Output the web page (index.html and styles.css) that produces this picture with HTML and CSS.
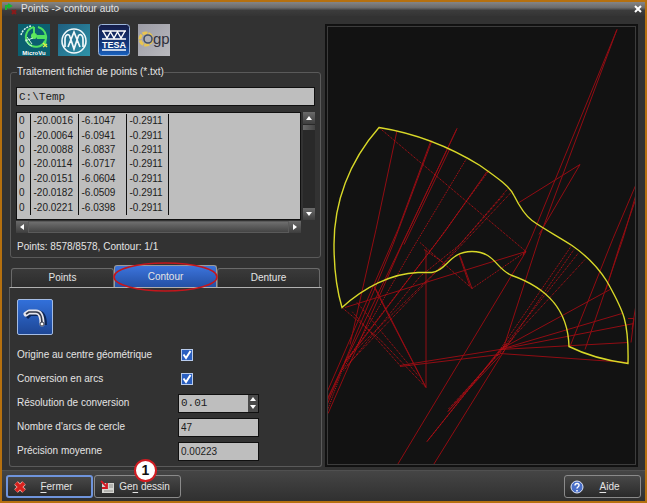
FILE: index.html
```
<!DOCTYPE html>
<html lang="fr">
<head>
  <meta charset="UTF-8" />
  <title>Points -&gt; contour auto</title>
  <link rel="stylesheet" href="styles.css">
</head>
<body>

  <div class="window">

    <!-- Barre de titre -->
    <header class="titlebar">
      <svg class="app-icon" viewBox="0 0 12 12">
        <path d="M1 7V3h4M3 1l3 2-3 2" fill="none" stroke="#19b432" stroke-width="2" />
        <path d="M7 7l4 4M11 7l-4 4" stroke="#8c1a1a" stroke-width="2" />
      </svg>
      <h1>Points -&gt; contour auto</h1>
      <button class="close" aria-label="Fermer la fenêtre">
        <svg viewBox="0 0 8 8"><path d="M1 1l6 6M7 1L1 7" stroke="#fff" stroke-width="2" /></svg>
      </button>
    </header>

    <main class="content">
      <section class="left">

        <!-- Choix du format de machine -->
        <div class="logos">
          <button aria-label="MicroVu">
            <svg viewBox="0 0 32 32">
              <rect width="32" height="32" fill="#0b6070" />
              <path d="M3 11a13 13 0 0 1 10-9" fill="none" stroke="#d8f4ee" stroke-width="1.5" stroke-dasharray="2 1" />
              <path d="M16 3a10 10 0 1 0 11 14M16 3v9M20 3a11 11 0 0 1 8 9h-9M19 14h9l-1 6" fill="none" stroke="#4fe060" stroke-width="2" />
              <circle cx="16" cy="12" r="3" fill="#5fe85c" />
              <path d="M8 15a8 8 0 0 0 6 7M9 13l5 7M7 17l8-3" fill="none" stroke="#c8f6d8" />
              <path d="M25 19l4 4m-4 0l4-3" stroke="#d8f04a" stroke-width="1.5" />
              <text x="16" y="31" class="logo-text" font-size="6" fill="#fff">MicroVu</text>
            </svg>
          </button>
          <button aria-label="Mitutoyo">
            <svg viewBox="0 0 32 32">
              <defs>
                <linearGradient id="g-mit" x1="0" y1="0" x2="1" y2="1">
                  <stop offset="0" stop-color="#1f5f80" />
                  <stop offset="1" stop-color="#2f93a8" />
                </linearGradient>
              </defs>
              <rect width="32" height="32" fill="url(#g-mit)" />
              <circle cx="16" cy="17" r="12" fill="none" stroke="#f2f8fa" stroke-width="1.6" />
              <path d="M7 23V16c0-6 4-7 5-3l4 12 4-12c1-4 5-3 5 3v7M10 23l6-15 6 15" fill="none" stroke="#f2f8fa" stroke-width="1.7" />
            </svg>
          </button>
          <button aria-label="TESA">
            <svg viewBox="0 0 32 32">
              <defs>
                <linearGradient id="g-tesa" x1="0" y1="0" x2="0" y2="1">
                  <stop offset="0" stop-color="#141c48" />
                  <stop offset="0.7" stop-color="#143a82" />
                  <stop offset="1" stop-color="#1a66c4" />
                </linearGradient>
              </defs>
              <rect x="0.5" y="0.5" width="31" height="31" rx="3" fill="url(#g-tesa)" stroke="#9db7dc" />
              <path d="M4 7h24M5 7l4 7 4-7M12 7l4 7 4-7M19 7l4 7 4-7M4 15h24M4 26h24" fill="none" stroke="#fff" stroke-width="1.4" />
              <text x="16" y="24" class="logo-text" font-size="9" fill="#fff">TESA</text>
            </svg>
          </button>
          <button aria-label="OGP">
            <svg viewBox="0 0 32 32">
              <defs>
                <linearGradient id="g-ogp" x1="0" y1="0" x2="1" y2="1">
                  <stop offset="0" stop-color="#9c9ca6" />
                  <stop offset="1" stop-color="#b9b9bd" />
                </linearGradient>
              </defs>
              <rect width="32" height="32" fill="url(#g-ogp)" />
              <circle cx="8" cy="15" r="6" fill="none" stroke="#e8c552" stroke-width="3" stroke-dasharray="5 1" />
              <circle cx="10" cy="15" r="4" fill="#b0b0b4" stroke="#43506c" stroke-width="1.6" />
              <text x="15" y="20" class="logo-text ogp" font-size="15" fill="#30303a">gp</text>
            </svg>
          </button>
        </div>

        <!-- Fichier de points -->
        <fieldset class="group">
          <legend>Traitement fichier de points (*.txt)</legend>
          <input class="field mono path" type="text" value="C:\Temp" aria-label="Chemin du fichier">

          <div class="list-area">
            <div class="list">
              <table>
                <tbody>
                  <tr><td>0</td><td>-20.0016</td><td>-6.1047</td><td>-0.2911</td><td></td></tr>
                  <tr><td>0</td><td>-20.0064</td><td>-6.0941</td><td>-0.2911</td><td></td></tr>
                  <tr><td>0</td><td>-20.0088</td><td>-6.0837</td><td>-0.2911</td><td></td></tr>
                  <tr><td>0</td><td>-20.0114</td><td>-6.0717</td><td>-0.2911</td><td></td></tr>
                  <tr><td>0</td><td>-20.0151</td><td>-6.0604</td><td>-0.2911</td><td></td></tr>
                  <tr><td>0</td><td>-20.0182</td><td>-6.0509</td><td>-0.2911</td><td></td></tr>
                  <tr><td>0</td><td>-20.0221</td><td>-6.0398</td><td>-0.2911</td><td></td></tr>
                </tbody>
              </table>
            </div>
            <div class="scroll vertical">
              <button aria-label="Haut"><svg viewBox="0 0 12 12"><path d="M6 4l3 4H3z" fill="#fff" /></svg></button>
              <span class="thumb"></span>
              <span class="track"></span>
              <button aria-label="Bas"><svg viewBox="0 0 12 12"><path d="M6 8l3-4H3z" fill="#fff" /></svg></button>
            </div>
            <div class="scroll horizontal">
              <button aria-label="Gauche"><svg viewBox="0 0 12 12"><path d="M4 6l4-3v6z" fill="#fff" /></svg></button>
              <span class="thumb"></span>
              <button aria-label="Droite"><svg viewBox="0 0 12 12"><path d="M8 6L4 3v6z" fill="#fff" /></svg></button>
            </div>
          </div>

          <p class="status">Points: 8578/8578, Contour: 1/1</p>
        </fieldset>

        <!-- Onglets -->
        <div class="tabs" role="tablist">
          <button class="tab" role="tab">Points</button>
          <button class="tab active" role="tab" aria-selected="true">Contour
            <svg class="ring" viewBox="0 0 106 30" preserveAspectRatio="none"><ellipse cx="53" cy="15" rx="52" ry="14" fill="none" stroke="#c4161c" stroke-width="1.6" /></svg>
          </button>
          <button class="tab" role="tab">Denture</button>
        </div>

        <div class="panel">
          <button class="tool" aria-label="Générer le contour">
            <svg viewBox="0 0 34 34">
              <path d="M8 17l4-4h7c5 0 7 4 7 12" fill="none" stroke="#0c2658" stroke-width="6" />
              <path d="M8 14l3-2h7c5 0 6 5 6 12" fill="none" stroke="#e6e6ee" stroke-width="5" stroke-linecap="round" stroke-linejoin="round" />
              <path d="M8 14l3-2h7c5 0 6 5 6 12" fill="none" stroke="#333848" stroke-width="1.6" stroke-linejoin="round" />
              <circle cx="24" cy="24" r="2" fill="#fff" stroke="#333848" />
            </svg>
          </button>

          <div class="options">
            <label for="origine">Origine au centre géométrique</label>
            <input id="origine" type="checkbox" checked>

            <label for="arcs">Conversion en arcs</label>
            <input id="arcs" type="checkbox" checked>

            <label for="resolution">Résolution de conversion</label>
            <div class="spin">
              <input id="resolution" class="mono" type="text" value="0.01">
              <div class="spin-buttons">
                <button aria-label="Augmenter"><svg viewBox="0 0 10 8"><path d="M5 2l3 4H2z" fill="#fff" /></svg></button>
                <button aria-label="Diminuer"><svg viewBox="0 0 10 8"><path d="M5 6l3-4H2z" fill="#fff" /></svg></button>
              </div>
            </div>

            <label for="nombre">Nombre d'arcs de cercle</label>
            <input id="nombre" class="field" type="text" value="47">

            <label for="precision">Précision moyenne</label>
            <input id="precision" class="field" type="text" value="0.00223">
          </div>
        </div>
      </section>

      <!-- Aperçu du contour -->
      <section class="preview">
        <svg viewBox="327 27 309 438" preserveAspectRatio="xMidYMid meet">
          <g class="rays">
            <path d="M397 131L376 230 350 345" />
            <path d="M431 141L398 230 326 395M432 141L393 245 326 408" />
            <path d="M457 129L409 230 326 402M457 129L402 245 328 414M450 149L404 245" />
            <path d="M487 172L445 232 343 366 326 404" />
            <path d="M526 252L397 466M505 350L433 466" />
            <path d="M617 30L531 239 523 256M617 30L539 239 503 350" />
            <path d="M580 165L519 203M580 165L539 235" />
            <path d="M636 185L613 239 570 347M636 195L623 239 585 350M636 199L620 245 606 290" />
            <path d="M500 350L610 290M500 350L622 314M500 350L634 324M500 350L628 343M500 354L628 363" />
            <path d="M628 319L634 319 631 343M636 305L632 330" />
            <path d="M500 350L427 442M506 345L448 412M500 356L448 412" />
            <path d="M400 366L500 350M400 367L500 355" />
            <path d="M426 250V388L375 288M426 388L386 311 373 285" />
            <path d="M472 289L460 256M470 287L459 255" />
            <path d="M345 308L490 263 526 252" />
          </g>
          <g class="rays dotted">
            <path d="M379 128L482 215 526 252" />
            <path d="M466 160L412 250 343 370" />
            <path d="M489 171L435 245 345 362" />
            <path d="M508 189L440 268 346 360 326 415M512 192L446 262 346 367" />
            <path d="M504 195L460 245 420 277 343 372" />
            <path d="M500 350L571 247M500 352L578 254M502 350L585 260M502 354L574 250" />
            <path d="M342 308L380 340 426 388M357 303L418 376M400 366L352 312" />
            <path d="M472 289L420 243M472 289L526 252M424 250L445 264" />
            <path d="M505 345L427 442M514 338L448 410" />
          </g>
          <path class="outline" d="M379 128C349 162 334 203 334 245C334 268 336 288 342 308C364 288 391 274 418 273L432 273C447 271 449 252 472 252C495 252 496 270 512 276C546 288 568 309 569 347C587 356 606 361 628 364C629 320 623 311 607 282C597 266 585 255 572 246C558 237 543 229 532 221C524 215 519 206 514 196C510 187 497 178 480 166C454 150 423 135 379 128Z" />
        </svg>
      </section>
    </main>

    <footer class="footer">
      <button class="action primary">
        <svg viewBox="0 0 14 14">
          <path d="M3 3l8 8M11 3l-8 8" stroke="#f6b0a8" stroke-width="5" />
          <path d="M3 3l8 8M11 3l-8 8" stroke="#d8201c" stroke-width="3.4" />
        </svg>
        <span><u>F</u>ermer</span>
      </button>
      <button class="action">
        <svg viewBox="0 0 14 14">
          <rect x="2" y="3" width="12" height="10" fill="#d6d6d2" />
          <path d="M9 5h4M9 7h4M4 11h9" stroke="#8e8e8a" />
          <path d="M1 1l6 6M7 3v5H2" fill="none" stroke="#d41a24" stroke-width="1.8" />
        </svg>
        <span>Ge<u>n</u> dessin</span>
        <b class="badge">1</b>
      </button>
      <button class="action help">
        <svg viewBox="0 0 14 14">
          <circle cx="7" cy="7" r="6" fill="#4a6fc8" stroke="#dfe6f6" />
          <path d="M5 5.500c0-3 4.500-2.500 4 0C8.800 7 7 7 7 8.500M7 10v1.500" fill="none" stroke="#fff" stroke-width="1.5" />
        </svg>
        <span><u>A</u>ide</span>
      </button>
    </footer>

  </div>

</body>
</html>
```
FILE: styles.css
```
* {
  box-sizing: border-box;
}

body {
  margin: 0;
  font-family: "Liberation Sans", Arial, sans-serif;
  font-size: 10px;
  line-height: 14px;
  color: #e4e4e4;
  background: #323232;
}

button, input {
  font: inherit;
  color: inherit;
  margin: 0;
  padding: 0;
}

button {
  border: none;
  background: none;
  cursor: pointer;
}

svg {
  display: block;
}

.window {
  display: flex;
  flex-direction: column;
  min-height: 100vh;
  border: 2px solid #b5700f;
}

/* Barre de titre */
.titlebar {
  display: flex;
  align-items: center;
  gap: 4px;
  height: 14px;
  padding: 0 3px;
  background: linear-gradient(#858585, #6a6a6a 40%, #3c3c3c 60%, #343434);
}
.titlebar h1 {
  flex: 1;
  margin: 0;
  font-size: 10px;
  font-weight: normal;
}
.app-icon {
  width: 12px;
  height: 12px;
}
.close svg {
  width: 8px;
  height: 8px;
}

.content {
  flex: 1;
  display: grid;
  grid-template-columns: 1fr 1fr;
  gap: 3px;
  padding: 8px 7px 3px;
}

.left {
  display: flex;
  flex-direction: column;
}

.logos {
  display: flex;
  gap: 8px;
  padding-left: 9px;
}
.logos svg {
  width: 32px;
  height: 32px;
}
.logo-text {
  font-family: "Liberation Sans", Arial, sans-serif;
  font-weight: bold;
  text-anchor: middle;
}
.logo-text.ogp {
  font-weight: normal;
  text-anchor: start;
}

/* Groupe fichier */
.group {
  min-width: 0;
  margin: 9px 1px 0;
  padding: 8px 5px 3px;
  border: 1px solid #5a5a5a;
  border-radius: 3px;
}
.group legend {
  margin-left: 1px;
  padding: 0;
}

.field, .spin {
  height: 19px;
  border: 1px solid #101010;
  background: #bebebe;
  color: #1c1c1c;
}
.field {
  padding: 0 2px;
}
.mono {
  font-family: "Liberation Mono", "Courier New", monospace;
  font-size: 11px;
}
.path {
  display: block;
  width: 100%;
}

.list-area {
  display: grid;
  grid-template-columns: 1fr 12px;
  column-gap: 2px;
  row-gap: 1px;
  margin-top: 6px;
}
.list {
  height: 108px;
  padding-top: 1px;
  border: 1px solid #101010;
  background: #bebebe;
  overflow: hidden;
}
.list table {
  width: 100%;
  height: 101px;
  border-collapse: collapse;
  table-layout: fixed;
  color: #1c1c1c;
}
.list td {
  width: 48px;
  height: 14px;
  padding: 0 0 0 3px;
  border-right: 1px solid #101010;
}
.list td:first-child {
  width: 13px;
  padding-left: 2px;
}
.list td:nth-child(4) {
  width: 42px;
}
.list td:last-child {
  width: auto;
  border-right: none;
}

.scroll {
  display: flex;
  background: #292929;
}
.scroll button {
  flex: none;
  background: linear-gradient(#6a6a6a, #3e3e3e);
}
.scroll svg {
  width: 12px;
  height: 12px;
}
.vertical {
  flex-direction: column;
}
.vertical .thumb {
  height: 5px;
  margin-top: 1px;
  background: linear-gradient(90deg, #6a6a6a, #444);
}
.vertical .track {
  flex: 1;
}
.horizontal .thumb {
  flex: 1;
  border: 1px solid #5a5a5a;
  background: linear-gradient(#6e6e6e, #444);
}

.status {
  margin: 7px 0 0 1px;
}

/* Onglets */
.tabs {
  display: flex;
  align-items: flex-end;
  margin-top: 7px;
  padding: 0 2px;
}
.tab {
  flex: 1;
  height: 19px;
  border: 1px solid #6a6a6a;
  border-bottom: none;
  border-radius: 3px 3px 0 0;
  background: linear-gradient(#3a3a3a, #2c2c2c);
}
.tab.active {
  position: relative;
  height: 22px;
  border-color: #9a9a9a;
  background: linear-gradient(#3c74dc, #2450a4);
}
.ring {
  position: absolute;
  top: -4px;
  left: -2px;
  width: calc(100% + 4px);
  height: 30px;
}

.panel {
  flex: 1;
  padding: 11px 7px 2px;
  border: 1px solid #5a5a5a;
  border-top-color: #b0b0b0;
  border-radius: 0 0 3px 3px;
}
.tool {
  display: block;
  border: 1px solid #a4bce4;
  border-radius: 2px;
  background: linear-gradient(#3270da, #1e4796);
}
.tool svg {
  width: 34px;
  height: 34px;
}

.options {
  display: grid;
  grid-template-columns: 161px 81px;
  grid-auto-rows: 24px;
  align-items: center;
  margin-top: 8px;
}
.options input[type="text"] {
  width: 100%;
  min-width: 0;
}
.options input[type="checkbox"] {
  appearance: none;
  width: 12px;
  height: 12px;
  margin-left: 3px;
  border: 1px solid #b8cbec;
  background: #2a5fc0;
  background-image: url("data:image/svg+xml,%3Csvg xmlns='http://www.w3.org/2000/svg' viewBox='0 0 10 10'%3E%3Cpath d='M1.500 4.500L4 8l4.500-7' fill='none' stroke='white' stroke-width='2'/%3E%3C/svg%3E");
}
.spin {
  display: flex;
}
.spin input {
  padding: 0 2px;
  border: none;
  background: none;
}
.spin-buttons {
  display: flex;
  flex-direction: column;
  background: #4a4a4a;
}
.spin-buttons button {
  flex: 1;
}
.spin-buttons svg {
  width: 10px;
  height: 8px;
}

/* Aperçu */
.preview {
  display: flex;
  padding: 1px;
  border: 1px solid #101010;
  background: #121212;
  outline: 1px solid #3c3c3c;
  outline-offset: -3px;
}
.preview svg {
  flex: 1;
  width: 0;
}
.rays {
  fill: none;
  stroke: #a80c12;
  stroke-width: 1;
  opacity: 0.85;
}
.dotted {
  stroke: #c41016;
  stroke-dasharray: 1 1;
  opacity: 1;
}
.outline {
  fill: none;
  stroke: #d8d828;
  stroke-width: 1.4;
}

/* Boutons du bas */
.footer {
  display: flex;
  gap: 1px;
  padding: 4px 4px 3px;
  border-top: 1px solid #505050;
  background: linear-gradient(#454545, #303030);
}
.action {
  position: relative;
  display: flex;
  align-items: center;
  width: 87px;
  height: 23px;
  padding: 0 5px;
  border: 1px solid #8a8a8a;
  border-radius: 3px;
  background: linear-gradient(#484848, #2a2a2a);
}
.action svg {
  width: 14px;
  height: 14px;
}
.action span {
  flex: 1;
  text-align: center;
}
.action u {
  text-underline-offset: 2px;
}
.primary {
  border: 2px solid #6f94dc;
}
.help {
  width: 77px;
  margin-left: auto;
}
.badge {
  position: absolute;
  top: -17px;
  left: 39px;
  width: 23px;
  height: 23px;
  border: 2px solid #d01c22;
  border-radius: 50%;
  background: #fff;
  color: #101010;
  font-size: 14px;
  line-height: 19px;
  text-align: center;
}
```
